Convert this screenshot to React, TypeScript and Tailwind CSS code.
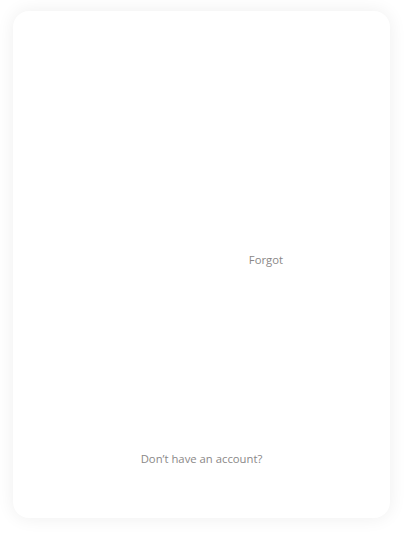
const LoginCard = () => {
  return (
    <div className="min-h-[533px] w-full bg-white pl-[13px] pt-[11px]" style={{ fontFamily: '"Open Sans", Lato, sans-serif' }}>
      <div className="flex h-[507px] w-[377px] flex-col rounded-2xl bg-white shadow-[0_0_18px_rgba(0,0,0,0.07)]">
        {/* form fields render white on white here */}
        <div className="h-[239px]" />
        <div className="flex justify-end pr-[107px]">
          <span className="text-[11.3px] leading-[20px] text-[#8a8787]">Forgot</span>
        </div>
        <div className="h-[179px]" />
        <div className="flex justify-center">
          <span className="text-[11.3px] leading-[20px] text-[#8a8787]">Don’t have an account?</span>
        </div>
      </div>
    </div>
  );
};

export default function App() {
  return <LoginCard />;
}
